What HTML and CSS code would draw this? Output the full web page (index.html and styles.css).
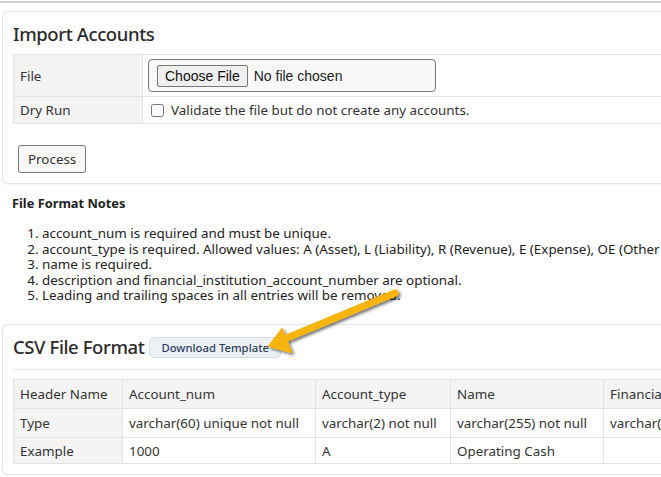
FILE: index.html
```html
<!DOCTYPE html>
<html lang="en">
<head>
  <meta charset="UTF-8">
  <title>Import Accounts</title>
  <link rel="stylesheet" href="styles.css">
</head>
<body>
  <div class="topbar"></div>
  <main class="page">
    <!-- Import form -->
    <div class="card">
      <h2>Import Accounts</h2>
      <table class="form-table">
        <tr class="file-row">
          <th>File</th>
          <td>
            <div class="file-box">
              <button type="button" class="choose-btn">Choose File</button>
              <span class="no-file">No file chosen</span>
            </div>
          </td>
        </tr>
        <tr>
          <th>Dry Run</th>
          <td>
            <label class="check"><input type="checkbox"> Validate the file but do not create any accounts.</label>
          </td>
        </tr>
      </table>
      <button type="button" class="process-btn">Process</button>
    </div>

    <!-- Notes -->
    <div class="notes">
      <h4>File Format Notes</h4>
      <ol>
        <li>account_num is required and must be unique.</li>
        <li>account_type is required. Allowed values: A (Asset), L (Liability), R (Revenue), E (Expense), OE (Other Expense), OR (Other Revenue).</li>
        <li>name is required.</li>
        <li>description and financial_institution_account_number are optional.</li>
        <li>Leading and trailing spaces in all entries will be removed.</li>
      </ol>
    </div>

    <!-- CSV format -->
    <div class="card csv-card">
      <div class="card-head">
        <h2>CSV File Format</h2>
        <button type="button" class="template-btn">Download Template</button>
      </div>
      <table class="csv-table">
        <tr class="head">
          <th>Header Name</th>
          <td class="c1">Account_num</td>
          <td class="c2">Account_type</td>
          <td class="c3">Name</td>
          <td>Financial_institution_account_number</td>
          <td>Description</td>
        </tr>
        <tr>
          <th>Type</th>
          <td>varchar(60) unique not null</td>
          <td>varchar(2) not null</td>
          <td>varchar(255) not null</td>
          <td>varchar(60)</td>
          <td>text</td>
        </tr>
        <tr class="last">
          <th>Example</th>
          <td>1000</td>
          <td>A</td>
          <td>Operating Cash</td>
          <td></td>
          <td></td>
        </tr>
      </table>
    </div>
  </main>

  <!-- annotation arrow -->
  <svg class="arrow" width="661" height="477" viewBox="0 0 661 477">
    <defs>
      <filter id="sh" x="-20%" y="-20%" width="140%" height="140%">
        <feDropShadow dx="2" dy="2" stdDeviation="1.5" flood-color="#000" flood-opacity="0.55"/>
      </filter>
    </defs>
    <g filter="url(#sh)" fill="#f6b40c" stroke="#f6b40c" stroke-linejoin="round" stroke-linecap="round">
      <line x1="395" y1="293" x2="282" y2="340" stroke-width="7"/>
      <polygon points="269,346 282,329 291,352" stroke-width="2"/>
    </g>
  </svg>
</body>
</html>
```

FILE: styles.css
```css
body {
  margin: 0;
  font-family: "Noto Sans", sans-serif;
  color: #333;
  background: #fff;
  overflow: hidden;
  width: 661px;
  height: 477px;
  position: relative;
}
.topbar {
  height: 1px;
  border-bottom: 2px solid #cfcfcf;
}
.page {
  width: 1000px;
  padding: 8px 0 0 2px;
}
.card {
  border: 1px solid #e1e5eb;
  border-radius: 6px;
  padding: 6px 10px 10px 10px;
  box-shadow: 0 1px 2px rgba(0, 0, 0, 0.04);
}
.card h2 {
  margin: 0 0 4px;
  font-size: 18.5px;
  font-weight: 500;
  letter-spacing: -0.4px;
  line-height: 32px;
  color: #2b2b2b;
}
table {
  border-collapse: collapse;
  width: 100%;
  font-size: 13.4px;
}
th, td {
  border: 1px solid #e3e3e3;
  text-align: left;
  font-weight: normal;
  padding: 4px 6px;
}
th {
  background: #f4f4f4;
}
.form-table th {
  width: 116px;
}
.form-table td {
  padding: 4px 5px;
}
.file-box {
  display: flex;
  align-items: center;
  gap: 6px;
  width: 270px;
  height: 31px;
  padding: 0 8px;
  border: 1px solid #767676;
  border-radius: 4px;
  background: #f8f8f8;
  font-family: "Liberation Sans", Arial, sans-serif;
  font-size: 14px;
}
.choose-btn {
  font-family: "Liberation Sans", Arial, sans-serif;
  font-size: 14px;
  padding: 2px 7px;
  border: 1px solid #767676;
  border-radius: 2px;
  background: #efefef;
  color: #111;
}
.no-file {
  color: #222;
}
.check {
  display: flex;
  align-items: center;
  gap: 7px;
  padding-left: 3px;
}
.check input {
  margin: 0;
  width: 13px;
  height: 13px;
}
.process-btn {
  margin: 21px 0 0 5px;
  padding: 4px 9px;
  font-family: inherit;
  font-size: 13.4px;
  color: #333;
  background: #f8f8f8;
  border: 1px solid #777;
  border-radius: 3px;
}
.notes {
  padding: 0 10px;
  margin-bottom: 20px;
}
.notes h4 {
  margin: 10px 0 14px;
  font-size: 12.8px;
  font-weight: bold;
  color: #222;
}
.notes ol {
  margin: 0;
  padding-left: 30px;
  font-size: 13.4px;
  line-height: 15.6px;
  color: #222;
}
.card-head {
  display: flex;
  align-items: center;
  gap: 5px;
  padding-bottom: 6px;
  border-bottom: 1px solid #e3e7ee;
  margin-bottom: 9px;
}
.card-head h2 {
  margin: 0;
}
.template-btn {
  font-family: inherit;
  font-size: 11.3px;
  font-weight: 500;
  color: #2e3f5c;
  background: #edf1f6;
  border: 1px solid #d6dde7;
  border-radius: 5px;
  padding: 2px 11px;
  margin-top: 1px;
}
.csv-table {
  width: auto;
}
.csv-table th, .csv-table td {
  padding: 4px 6px;
  line-height: 20px;
  white-space: nowrap;
}
.csv-table .last th, .csv-table .last td {
  padding: 3px 6px 2px;
}
.csv-table th {
  width: 96px;
}
.csv-table .head td {
  background: #f4f4f4;
}
.csv-table .c1 { width: 180px; }
.csv-table .c2 { width: 122px; }
.csv-table .c3 { width: 140px; }
.arrow {
  position: absolute;
  left: 0;
  top: 0;
  pointer-events: none;
}
```
